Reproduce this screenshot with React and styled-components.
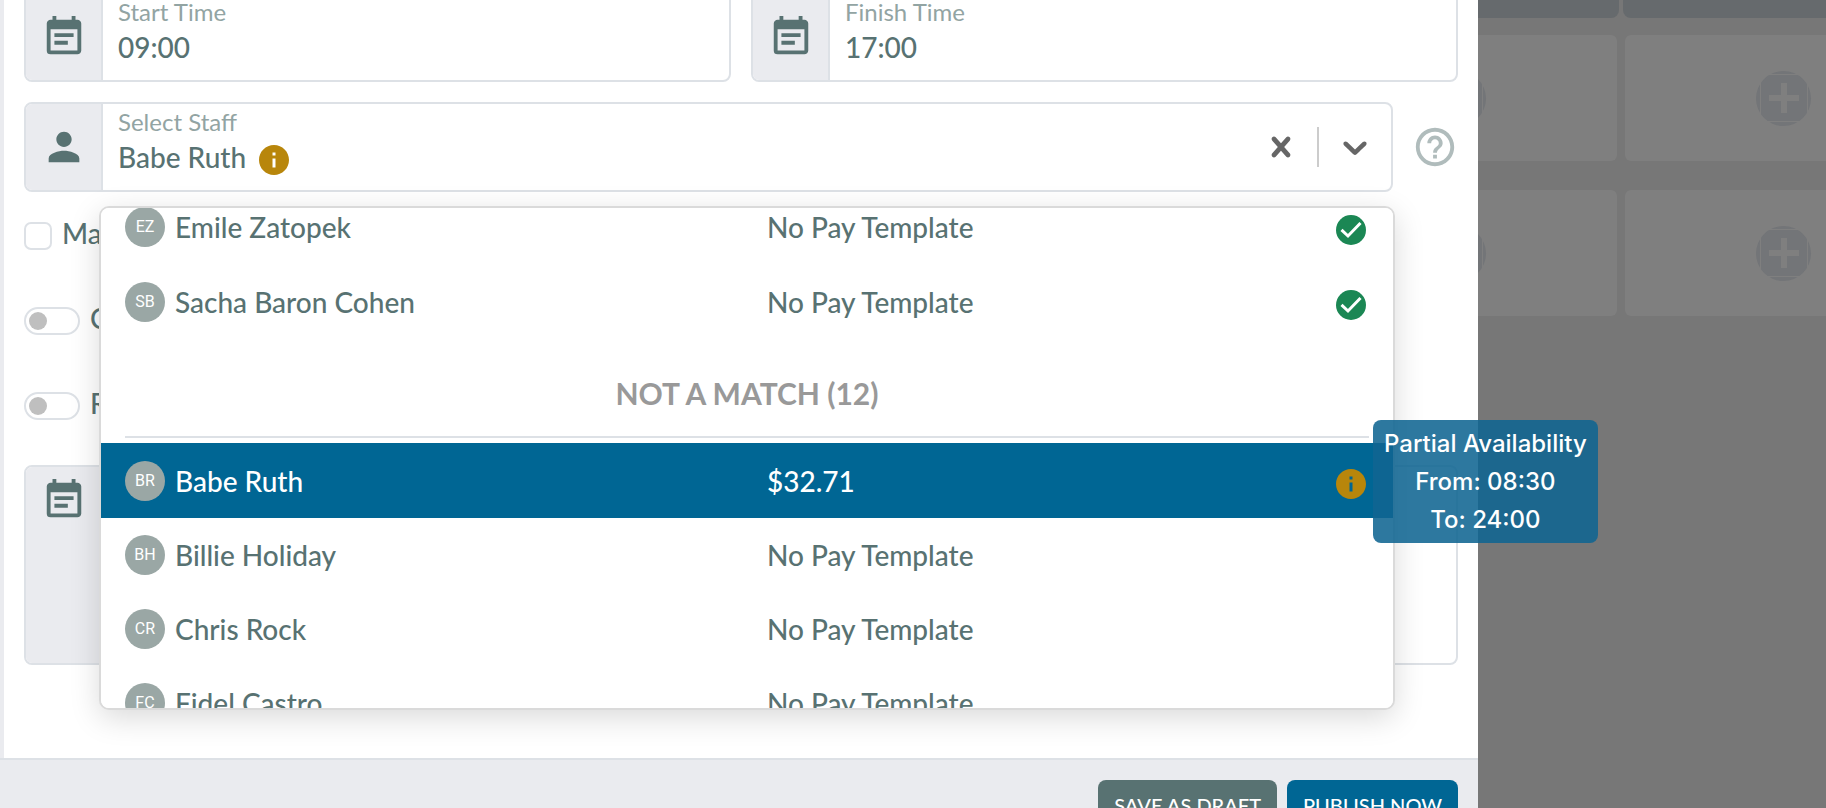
import React, { useLayoutEffect, useRef, useState } from 'react';
import styled, { createGlobalStyle } from 'styled-components';
import { MdEventNote, MdPerson, MdHelpOutline, MdInfo, MdAdd } from 'react-icons/md';

const GlobalStyle = createGlobalStyle`
    * {
        box-sizing: border-box;
    }

    body {
        margin: 0;
        font-family: Lato, "Liberation Sans", sans-serif;
        font-size: 28px;
        font-weight: 500;
        color: #587272;
        background: #777777;
    }

    button, input, textarea {
        font: inherit;
        color: inherit;
    }
`

const Page = styled.div`
    display: flex;
    height: 100vh;
    overflow: hidden;
`

const Modal = styled.main`
    flex: 1;
    min-width: 0;
    position: relative;
    z-index: 1;
    background: white;
`

const Form = styled.form`
    margin-top: -8px;
    padding: 0 20px 93px;
    border-left: 4px solid #eaebef;
`

const FieldRow = styled.div`
    display: flex;
    align-items: center;
    gap: ${props => props.$gap || '20px'};
    margin-bottom: 20px;
`

const Field = styled.div`
    flex: 1;
    min-width: 0;
    display: flex;
    height: ${props => props.$tall ? '200px' : '90px'};
    border: 2px solid #dde1e6;
    border-radius: 8px;
    background: white;
`

const AddOn = styled.div`
    flex: 0 0 77px;
    display: flex;
    justify-content: center;
    align-items: ${props => props.$top ? 'flex-start' : 'center'};
    padding: ${props => props.$top ? '10px 0' : '0'};
    border-right: 2px solid #dde1e6;
    border-radius: 6px 0 0 6px;
    background: #eaebef;
    font-size: 46px;
`

const FieldBody = styled.div`
    flex: 1;
    min-width: 0;
    padding: 2px 15px 0;
`

const FieldLabel = styled.label`
    display: block;
    font-size: 24px;
    font-weight: 400;
    line-height: 32px;
    color: #92a4a3;
`

const TextInput = styled.input`
    display: block;
    width: 100%;
    height: 38px;
    padding: 0;
    border: 0;
    outline: 0;
    background: none;
`

const Notes = styled.textarea`
    flex: 1;
    padding: 14px;
    border: 0;
    outline: 0;
    resize: none;
    background: none;
`

const SelectBody = styled.div`
    position: relative;
    flex: 1;
    min-width: 0;
    display: flex;
    align-items: center;
`

const ValueArea = styled.div`
    flex: 1;
    align-self: stretch;
    padding: 2px 15px 0;
`

const ValueButton = styled.button`
    display: flex;
    align-items: center;
    gap: 10px;
    height: 38px;
    padding: 0;
    border: 0;
    background: none;

    svg {
        margin-top: 6px;
        font-size: 36px;
        color: #b8860b;
    }
`

const Indicator = styled.button`
    display: flex;
    margin: 0 16px;
    padding: 0;
    border: 0;
    background: none;
    color: #666666;
`

const Separator = styled.span`
    width: 2px;
    height: 40px;
    background: #cccccc;
`

const HelpButton = styled.button`
    display: flex;
    padding: 0;
    border: 0;
    background: none;
    font-size: 46px;
    color: #b0bcbc;
`

const Menu = styled.div`
    position: absolute;
    z-index: 2;
    top: calc(100% + 16px);
    left: -4px;
    right: -4px;
    height: 504px;
    overflow: hidden;
    border: 2px solid #dadada;
    border-radius: 10px;
    background: white;
    box-shadow: 0 8px 30px rgba(0, 0, 0, 0.15);
`

const MenuScroll = styled.div`
    height: 100%;
    overflow-y: auto;
    scrollbar-width: none;
`

const Option = styled.div`
    display: grid;
    grid-template-columns: 1fr 1fr;
    align-items: center;
    min-height: 74px;
    padding: 16px 24px;
    line-height: 40px;
    color: ${props => props.$selected ? 'white' : 'inherit'};
    background: ${props => props.$selected ? '#006694' : 'white'};
`

const Person = styled.div`
    display: flex;
    align-items: center;
    gap: 10px;
`

const Avatar = styled.span`
    width: 40px;
    height: 40px;
    border-radius: 50%;
    background: #9aa7a5;
    color: white;
    font-family: Roboto, "Liberation Sans", sans-serif;
    font-size: 16px;
    font-weight: 400;
    text-align: center;
`

const Pay = styled.div`
    display: flex;
    align-items: center;
    justify-content: space-between;
    padding-left: 20px;
`

const Status = styled.span`
    display: flex;
    padding-top: 7px;
    font-size: 36px;
    color: #b8860b;
`

const GroupTitle = styled.h2`
    margin: 0 24px 5px;
    padding: 36px 0 25px;
    border-bottom: 2px solid #dde1e6;
    font-size: 30px;
    font-weight: 700;
    line-height: 36px;
    text-align: center;
    text-transform: uppercase;
    color: #999999;
`

const Tooltip = styled.div`
    position: absolute;
    z-index: 3;
    top: 316px;
    left: calc(100% - 18px);
    padding: 5px 11px 4px;
    border-radius: 8px;
    background: rgba(16, 101, 146, 0.88);
    color: white;
    font-family: Inter, "Liberation Sans", sans-serif;
    font-size: 24px;
    font-weight: 500;
    line-height: 38px;
    text-align: center;
    white-space: nowrap;
`

const CheckRow = styled.label`
    display: flex;
    align-items: center;
    gap: 10px;
    height: 28px;
    margin-top: ${props => props.$first ? '30px' : '57px'};

    span {
        padding-bottom: 6px;
    }
`

const CheckBox = styled.input`
    appearance: none;
    width: 28px;
    height: 28px;
    margin: 0;
    border: 2px solid #dde1e6;
    border-radius: 7px;
    background: white;
`

const Toggle = styled.input`
    appearance: none;
    display: flex;
    align-items: center;
    width: 56px;
    height: 28px;
    margin: 0;
    padding: 0 3px;
    border: 2px solid #dde1e6;
    border-radius: 14px;
    background: white;

    &::before {
        content: '';
        width: 18px;
        height: 18px;
        border-radius: 50%;
        background: #bfbfbf;
    }
`

const NotesRow = styled.div`
    display: flex;
    margin-top: 45px;
`

const Footer = styled.footer`
    display: flex;
    justify-content: flex-end;
    gap: 10px;
    padding: 20px;
    border-top: 2px solid #dde1e6;
    background: #eaebef;
`

const FooterButton = styled.button`
    height: 50px;
    padding: 0 16px;
    border: 0;
    border-radius: 8px;
    background: ${props => props.$primary ? '#006694' : '#587272'};
    color: white;
    font-size: 20px;
    text-transform: uppercase;
`

const Backdrop = styled.aside`
    flex: 0 0 348px;
    min-width: 0;
    background: #777777;
`

const Board = styled.div`
    display: grid;
    grid-template-columns: repeat(2, 321px);
    column-gap: 4px;
    margin-left: -180px;
`

const DayHeader = styled.div`
    height: 18px;
    margin-bottom: 17px;
    border-radius: 0 0 8px 8px;
    background: #666a6d;
`

const ShiftCell = styled.div`
    display: flex;
    align-items: center;
    justify-content: center;
    height: 126px;
    margin: 0 2px 29px;
    border-radius: 6px;
    background: #7f7f7f;
`

const AddButton = styled.button`
    display: flex;
    align-items: center;
    justify-content: center;
    width: 55px;
    height: 55px;
    padding: 0;
    border: 0;
    border-radius: 50%;
    background: #737578;
    color: #7f7f7f;
    font-size: 48px;

    svg {
        stroke: currentColor;
        stroke-width: 1px;
    }
`

const staff = [
    { name: 'Emile Zatopek', initials: 'EZ', pay: 'No Pay Template', status: 'match' },
    { name: 'Sacha Baron Cohen', initials: 'SB', pay: 'No Pay Template', status: 'match' },
]

const notMatching = [
    { name: 'Babe Ruth', initials: 'BR', pay: '$32.71', status: 'partial' },
    { name: 'Billie Holiday', initials: 'BH', pay: 'No Pay Template' },
    { name: 'Chris Rock', initials: 'CR', pay: 'No Pay Template' },
    { name: 'Fidel Castro', initials: 'FC', pay: 'No Pay Template' },
]

const CrossIcon = () => (
    <svg width="40" height="40" viewBox="0 0 20 20" fill="currentColor">
        <path d="M14.348 14.849c-0.469 0.469-1.229 0.469-1.697 0l-2.651-3.030-2.651 3.029c-0.469 0.469-1.229 0.469-1.697 0-0.469-0.469-0.469-1.229 0-1.697l2.758-3.15-2.759-3.152c-0.469-0.469-0.469-1.228 0-1.697s1.228-0.469 1.697 0l2.652 3.031 2.651-3.031c0.469-0.469 1.228-0.469 1.697 0s0.469 1.229 0 1.697l-2.758 3.152 2.758 3.15c0.469 0.469 0.469 1.229 0 1.698z" />
    </svg>
)

const ChevronIcon = () => (
    <svg width="40" height="40" viewBox="0 0 20 20" fill="currentColor">
        <path d="M4.516 7.548c0.436-0.446 1.043-0.481 1.576 0l3.908 3.747 3.908-3.747c0.533-0.481 1.141-0.446 1.574 0 0.436 0.445 0.408 1.197 0 1.615-0.406 0.418-4.695 4.502-4.695 4.502-0.217 0.223-0.502 0.335-0.787 0.335s-0.57-0.112-0.789-0.335c0 0-4.287-4.084-4.695-4.502s-0.436-1.17 0-1.615z" />
    </svg>
)

const CheckIcon = () => (
    <svg width="36" height="36" viewBox="0 0 36 36">
        <circle cx="18" cy="18" r="15" fill="#1b8754" />
        <path d="M8.500 17.800l6.500 6.200 12.500-13" fill="none" stroke="white" strokeWidth="3" />
    </svg>
)

const StaffOption = ({ person, selected, onSelect }) => (
    <Option role="option" aria-selected={selected} $selected={selected} onClick={() => onSelect(person.name)}>
        <Person>
            <Avatar>{person.initials}</Avatar>
            {person.name}
        </Person>
        <Pay>
            {person.pay}
            {person.status && (
                <Status>{person.status === 'match' ? <CheckIcon /> : <MdInfo />}</Status>
            )}
        </Pay>
    </Option>
)

const TimeField = ({ id, label, initial }) => {

    const [ time, setTime ] = useState(initial);

    return (
        <Field>
            <AddOn><MdEventNote /></AddOn>
            <FieldBody>
                <FieldLabel htmlFor={id}>{label}</FieldLabel>
                <TextInput id={id} type="text" value={time} onChange={e => setTime(e.target.value)} />
            </FieldBody>
        </Field>
    )
}

const App = () => {

    const [ selected, setSelected ] = useState('Babe Ruth');
    const menuRef = useRef(null);

    useLayoutEffect(() => {
        menuRef.current.scrollTop = 19;
    }, [])

    return (
        <Page>
            <GlobalStyle />
            <Modal>
                <Form onSubmit={e => e.preventDefault()}>
                    <FieldRow>
                        <TimeField id="start" label="Start Time" initial="09:00" />
                        <TimeField id="finish" label="Finish Time" initial="17:00" />
                    </FieldRow>
                    <FieldRow $gap="19px">
                        <Field>
                            <AddOn><MdPerson /></AddOn>
                            <SelectBody>
                                <ValueArea>
                                    <FieldLabel htmlFor="staff">Select Staff</FieldLabel>
                                    <ValueButton id="staff" type="button" aria-haspopup="listbox" aria-expanded="true">
                                        {selected}
                                        {selected && <MdInfo />}
                                    </ValueButton>
                                </ValueArea>
                                <Indicator type="button" aria-label="Clear" onClick={() => setSelected('')}>
                                    <CrossIcon />
                                </Indicator>
                                <Separator />
                                <Indicator type="button" aria-label="Open">
                                    <ChevronIcon />
                                </Indicator>
                                <Menu>
                                    <MenuScroll ref={menuRef} role="listbox">
                                        {staff.map(person => (
                                            <StaffOption
                                                key={person.name}
                                                person={person}
                                                selected={person.name === selected}
                                                onSelect={setSelected}
                                            />
                                        ))}
                                        <GroupTitle>Not a match (12)</GroupTitle>
                                        {notMatching.map(person => (
                                            <StaffOption
                                                key={person.name}
                                                person={person}
                                                selected={person.name === selected}
                                                onSelect={setSelected}
                                            />
                                        ))}
                                    </MenuScroll>
                                </Menu>
                                <Tooltip role="tooltip">
                                    <div>Partial Availability</div>
                                    <div>From: 08:30</div>
                                    <div>To: 24:00</div>
                                </Tooltip>
                            </SelectBody>
                        </Field>
                        <HelpButton type="button" aria-label="Help"><MdHelpOutline /></HelpButton>
                    </FieldRow>
                    <CheckRow $first>
                        <CheckBox type="checkbox" />
                        <span>Ma</span>
                    </CheckRow>
                    <CheckRow>
                        <Toggle type="checkbox" role="switch" />
                        <span>C</span>
                    </CheckRow>
                    <CheckRow>
                        <Toggle type="checkbox" role="switch" />
                        <span>R</span>
                    </CheckRow>
                    <NotesRow>
                        <Field $tall>
                            <AddOn $top><MdEventNote /></AddOn>
                            <Notes aria-label="Notes" />
                        </Field>
                    </NotesRow>
                </Form>
                <Footer>
                    <FooterButton type="button">Save as draft</FooterButton>
                    <FooterButton type="button" $primary>Publish now</FooterButton>
                </Footer>
            </Modal>
            <Backdrop>
                <Board>
                    <DayHeader />
                    <DayHeader />
                    {[0, 1, 2, 3].map(cell => (
                        <ShiftCell key={cell}>
                            <AddButton type="button" aria-label="Add shift"><MdAdd /></AddButton>
                        </ShiftCell>
                    ))}
                </Board>
            </Backdrop>
        </Page>
    )
}

export default App
